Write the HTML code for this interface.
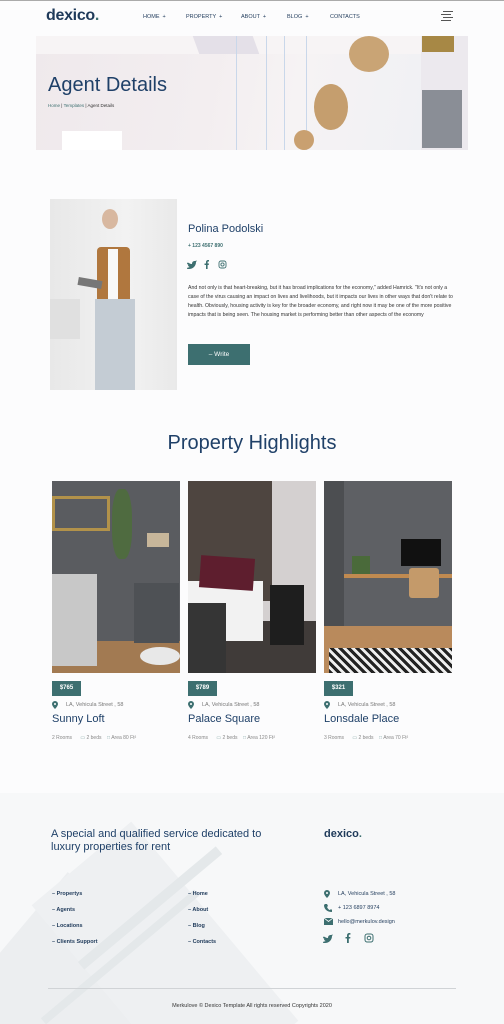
<!DOCTYPE html>
<html style="overflow:hidden;width:504px;height:1024px"><head><meta charset="utf-8"><style>
*{margin:0;padding:0;box-sizing:border-box}
body{width:504px;height:1024px;background:#fcfcfd;font-family:"Liberation Sans",sans-serif;position:relative;overflow:hidden;color:#1f3a5a}
.a{position:absolute}
.nav{font-size:5.5px;color:#1f3a5a;top:14px}
.navy{color:#1f3a5a}
.teal{color:#3d6f70}
.meta{font-size:5px;color:#888;top:735px}
.loc{font-size:5.5px;color:#777;top:702px}
.price{background:#3d6f70;color:#fff;font-size:6px;font-weight:bold;width:29px;height:15px;line-height:15px;text-align:center;top:681px}
.title{font-size:11px;color:#1f4068;top:713px}
.fl{font-size:5.5px;font-weight:bold;color:#1f3a5a}
.fc{font-size:5.5px;color:#1f3a5a}
</style></head><body>
<div class="a" style="left:0;top:0;width:504px;height:1px;background:#aaa"></div>
<div class="a navy" style="left:46px;top:7px;font-size:16px;font-weight:bold;letter-spacing:-0.3px">dexico<span style="color:#3d6f70">.</span></div>
<div class="a nav" style="left:143px">HOME &nbsp;+</div>
<div class="a nav" style="left:186px">PROPERTY &nbsp;+</div>
<div class="a nav" style="left:241px">ABOUT &nbsp;+</div>
<div class="a nav" style="left:287px">BLOG &nbsp;+</div>
<div class="a nav" style="left:330px">CONTACTS</div>
<div class="a" style="left:443px;top:11px;width:10px;height:1.3px;background:#555;box-shadow:-2px 3px 0 #555,0 6px 0 #555,-2px 9px 0 #555"></div>
<div class="a" style="left:36px;top:36px;width:432px;height:114px;background:linear-gradient(100deg,#efe9ec 0%,#f3eef0 40%,#f6f3f4 60%,#eef0f4 100%);overflow:hidden">
<div class="a" style="left:0;top:0;width:432px;height:18px;background:#f7f4f5"></div>
<div class="a" style="left:160px;top:0;width:60px;height:18px;background:#e4e0e8;transform:skewX(20deg)"></div>
<div class="a" style="left:26px;top:95px;width:60px;height:20px;background:#fff"></div>
<div class="a" style="left:200px;top:0;width:1px;height:114px;background:#c9d7ea;box-shadow:30px 0 #c9d7ea,48px 0 #c9d7ea,70px 0 #c9d7ea"></div>
<div class="a" style="left:313px;top:0;width:40px;height:36px;border-radius:50%;background:#c9a475"></div>
<div class="a" style="left:278px;top:48px;width:34px;height:46px;border-radius:50%;background:#c59e6e"></div>
<div class="a" style="left:258px;top:94px;width:20px;height:20px;border-radius:50%;background:#c9a070"></div>
<div class="a" style="left:385px;top:0;width:47px;height:114px;background:#ece9ee"></div>
<div class="a" style="left:386px;top:0;width:32px;height:16px;background:#a78845"></div>
<div class="a" style="left:386px;top:54px;width:40px;height:58px;background:#8a8e96"></div>
</div>
<div class="a" style="left:48px;top:74px;font-size:20px;color:#1f4068">Agent Details</div>
<div class="a" style="left:48px;top:103px;font-size:4.5px;color:#333"><span class="teal">Home</span> | <span class="teal">Templates</span> | Agent Details</div>
<div class="a" style="left:50px;top:199px;width:127px;height:191px;background:linear-gradient(90deg,#e8e8e8,#f2f2f2 60%,#e9e9e9);overflow:hidden">
<div class="a" style="left:52px;top:10px;width:16px;height:20px;border-radius:50%;background:#d8b8a0"></div>
<div class="a" style="left:47px;top:48px;width:33px;height:103px;background:#b0773e;border-radius:4px"></div>
<div class="a" style="left:58px;top:50px;width:10px;height:50px;background:#f8f8f8"></div>
<div class="a" style="left:45px;top:100px;width:40px;height:91px;background:#c4ccd4"></div>
<div class="a" style="left:0;top:100px;width:30px;height:40px;background:#e0e0e0"></div>
<div class="a" style="left:28px;top:80px;width:24px;height:8px;background:#777;transform:rotate(10deg)"></div>
</div>
<div class="a" style="left:188px;top:223px;font-size:11px;color:#1f4068">Polina Podolski</div>
<div class="a teal" style="left:188px;top:243px;font-size:5px;font-weight:bold">+ 123 4567 890</div>
<svg class="a" style="left:187px;top:260px" width="42" height="9" viewBox="0 0 42 9"><path d="M0 2c2 1 3 2 5 2 0-2 1-3 3-3l2-.5-1 1.5c0 4-3 7-7 7-1 0-2 0-3-1 2 0 3-1 4-1-1 0-2-1-2-2h1c-1 0-2-1-2-2h1z" fill="#3d6f70"/><path d="M19 9V5h-1.5V3.5H19V2c0-1 .8-2 2-2h1v1.5h-.8c-.4 0-.6.3-.6.6V3.5h1.4L21.7 5h-1.1v4z" fill="#3d6f70"/><rect x="32" y="1" width="7" height="7" rx="2" fill="none" stroke="#3d6f70" stroke-width="0.9"/><circle cx="35.5" cy="4.5" r="1.6" fill="none" stroke="#3d6f70" stroke-width="0.9"/></svg>
<div class="a" style="left:188px;top:284px;width:270px;font-size:5.2px;line-height:9px;color:#333">And not only is that heart-breaking, but it has broad implications for the economy," added Hamrick. "It's not only a case of the virus causing an impact on lives and livelihoods, but it impacts our lives in other ways that don't relate to health. Obviously, housing activity is key for the broader economy, and right now it may be one of the more positive impacts that is being seen. The housing market is performing better than other aspects of the economy</div>
<div class="a" style="left:188px;top:344px;width:62px;height:21px;background:#3d6f70;color:#fff;font-size:6.5px;text-align:center;line-height:21px">– Write</div>
<div class="a" style="left:0;top:432px;width:504px;text-align:center;font-size:20px;color:#1f4068">Property Highlights</div>
<div class="a" style="left:52px;top:481px;width:128px;height:192px;background:#5a5c60;overflow:hidden">
<div class="a" style="left:0;top:160px;width:128px;height:32px;background:#a27a52"></div>
<div class="a" style="left:0;top:15px;width:58px;height:35px;border:3px solid #b2924a"></div>
<div class="a" style="left:0;top:93px;width:45px;height:92px;background:#c8c8c8"></div>
<div class="a" style="left:82px;top:102px;width:45px;height:60px;background:#4e5155"></div>
<div class="a" style="left:95px;top:52px;width:22px;height:14px;background:#c7b69a"></div>
<div class="a" style="left:88px;top:166px;width:40px;height:18px;border-radius:50%;background:#e8e8e8"></div>
<div class="a" style="left:60px;top:8px;width:20px;height:70px;background:#4f6b40;border-radius:40%"></div>
</div>
<div class="a" style="left:188px;top:481px;width:128px;height:192px;background:#d4d0d0;overflow:hidden">
<div class="a" style="left:0;top:0;width:84px;height:120px;background:#4e4540"></div>
<div class="a" style="left:0;top:140px;width:128px;height:52px;background:#403b39"></div>
<div class="a" style="left:0;top:100px;width:75px;height:60px;background:#f2f2f2"></div>
<div class="a" style="left:12px;top:76px;width:54px;height:32px;background:#5e1e2e;transform:rotate(4deg)"></div>
<div class="a" style="left:0;top:122px;width:38px;height:70px;background:#353535"></div>
<div class="a" style="left:82px;top:104px;width:34px;height:60px;background:#1e1e1e"></div>
</div>
<div class="a" style="left:324px;top:481px;width:128px;height:192px;background:#5e6064;overflow:hidden">
<div class="a" style="left:0;top:0;width:20px;height:192px;background:#4c4e51"></div>
<div class="a" style="left:0;top:145px;width:128px;height:47px;background:#b98a5c"></div>
<div class="a" style="left:5px;top:167px;width:123px;height:25px;background:repeating-linear-gradient(45deg,#222 0 3px,#eee 3px 6px)"></div>
<div class="a" style="left:20px;top:93px;width:108px;height:4px;background:#c08a50"></div>
<div class="a" style="left:77px;top:58px;width:40px;height:27px;background:#111"></div>
<div class="a" style="left:28px;top:75px;width:18px;height:18px;background:#4a6a3a"></div>
<div class="a" style="left:85px;top:87px;width:30px;height:30px;background:#c49a6a;border-radius:3px"></div>
</div>
<div class="a price" style="left:52px">$765</div>
<div class="a price" style="left:188px">$789</div>
<div class="a price" style="left:324px">$321</div>
<svg class="a" style="left:52px;top:701px" width="6" height="8"><path d="M3 0a3 3 0 013 3c0 2-3 5-3 5S0 5 0 3a3 3 0 013-3z" fill="#3d6f70"/><circle cx="3" cy="3" r="1" fill="#fff"/></svg>
<svg class="a" style="left:188px;top:701px" width="6" height="8"><path d="M3 0a3 3 0 013 3c0 2-3 5-3 5S0 5 0 3a3 3 0 013-3z" fill="#3d6f70"/><circle cx="3" cy="3" r="1" fill="#fff"/></svg>
<svg class="a" style="left:324px;top:701px" width="6" height="8"><path d="M3 0a3 3 0 013 3c0 2-3 5-3 5S0 5 0 3a3 3 0 013-3z" fill="#3d6f70"/><circle cx="3" cy="3" r="1" fill="#fff"/></svg>
<div class="a loc" style="left:66px">LA, Vehicula Street , 58</div>
<div class="a loc" style="left:202px">LA, Vehicula Street , 58</div>
<div class="a loc" style="left:338px">LA, Vehicula Street , 58</div>
<div class="a title" style="left:52px">Sunny Loft</div>
<div class="a title" style="left:188px">Palace Square</div>
<div class="a title" style="left:324px">Lonsdale Place</div>
<div class="a meta" style="left:52px">2 Rooms &nbsp;&nbsp;&nbsp;&nbsp;&nbsp;<span style="color:#8aa">▭</span> 2 beds &nbsp;&nbsp;&nbsp;<span style="color:#8aa">□</span> Area 80 Ft²</div>
<div class="a meta" style="left:188px">4 Rooms &nbsp;&nbsp;&nbsp;&nbsp;&nbsp;<span style="color:#8aa">▭</span> 2 beds &nbsp;&nbsp;&nbsp;<span style="color:#8aa">□</span> Area 120 Ft²</div>
<div class="a meta" style="left:324px">3 Rooms &nbsp;&nbsp;&nbsp;&nbsp;&nbsp;<span style="color:#8aa">▭</span> 2 beds &nbsp;&nbsp;&nbsp;<span style="color:#8aa">□</span> Area 70 Ft²</div>
<div class="a" style="left:0;top:793px;width:504px;height:231px;background:#f7f8f9;overflow:hidden">
<div class="a" style="left:-20px;top:120px;width:200px;height:200px;background:#eceef0;transform:rotate(40deg)"></div>
<div class="a" style="left:100px;top:40px;width:130px;height:260px;background:#eef0f2;transform:rotate(-40deg)"></div>
<div class="a" style="left:60px;top:110px;width:180px;height:10px;background:#e4e8ea;transform:rotate(-40deg)"></div>
<div class="a" style="left:20px;top:160px;width:200px;height:8px;background:#e4e8ea;transform:rotate(-40deg)"></div>
</div>
<div class="a" style="left:51px;top:828px;font-size:11px;line-height:12.5px;color:#1f4068">A special and qualified service dedicated to<br>luxury properties for rent</div>
<div class="a navy" style="left:324px;top:828px;font-size:11px;font-weight:bold">dexico<span style="color:#3d6f70">.</span></div>
<div class="a fl" style="left:52px;top:891px">– Propertys</div>
<div class="a fl" style="left:52px;top:907px">– Agents</div>
<div class="a fl" style="left:52px;top:923px">– Locations</div>
<div class="a fl" style="left:52px;top:939px">– Clients Support</div>
<div class="a fl" style="left:188px;top:891px">– Home</div>
<div class="a fl" style="left:188px;top:907px">– About</div>
<div class="a fl" style="left:188px;top:923px">– Blog</div>
<div class="a fl" style="left:188px;top:939px">– Contacts</div>
<svg class="a" style="left:324px;top:890px" width="6" height="8"><path d="M3 0a3 3 0 013 3c0 2-3 5-3 5S0 5 0 3a3 3 0 013-3z" fill="#3d6f70"/><circle cx="3" cy="3" r="1" fill="#fff"/></svg>
<svg class="a" style="left:324px;top:904px" width="8" height="8"><path d="M1 0h2l1 2-1 1c1 2 2 3 3 3l1-1 1 1v2C3 8 0 5 0 1z" fill="#3d6f70"/></svg>
<svg class="a" style="left:324px;top:918px" width="9" height="7"><rect width="9" height="7" fill="#3d6f70"/><path d="M0 0l4.5 3.5L9 0" stroke="#fff" stroke-width="0.8" fill="none"/></svg>
<div class="a fc" style="left:338px;top:891px">LA, Vehicula Street , 58</div>
<div class="a fc" style="left:338px;top:905px">+ 123 6897 8974</div>
<div class="a fc" style="left:338px;top:919px">hello@merkulov.design</div>
<svg class="a" style="left:323px;top:933px" width="52" height="10" viewBox="0 0 52 10"><path d="M0 2c2 1 3 2 5 2 0-2 1-3 3-3l2-.5-1 1.5c0 4-3 7-7 7-1 0-2 0-3-1 2 0 3-1 4-1-1 0-2-1-2-2h1c-1 0-2-1-2-2h1z" fill="#3d6f70" transform="translate(0,1)"/><path d="M24 10V5.5h-1.5V4H24V2.5c0-1.2.8-2.5 2.2-2.5h1.2v1.6h-.9c-.4 0-.7.3-.7.7V4h1.6L27.2 5.5h-1.4V10z" fill="#3d6f70"/><rect x="42" y="1" width="8" height="8" rx="2.2" fill="none" stroke="#3d6f70" stroke-width="1"/><circle cx="46" cy="5" r="1.8" fill="none" stroke="#3d6f70" stroke-width="1"/></svg>
<div class="a" style="left:48px;top:988px;width:408px;height:1px;background:#d0d3d6"></div>
<div class="a" style="left:0;top:1003px;width:504px;text-align:center;font-size:5.5px;color:#333">Merkulove © Dexico Template All rights reserved Copyrights 2020</div>
</body></html>
